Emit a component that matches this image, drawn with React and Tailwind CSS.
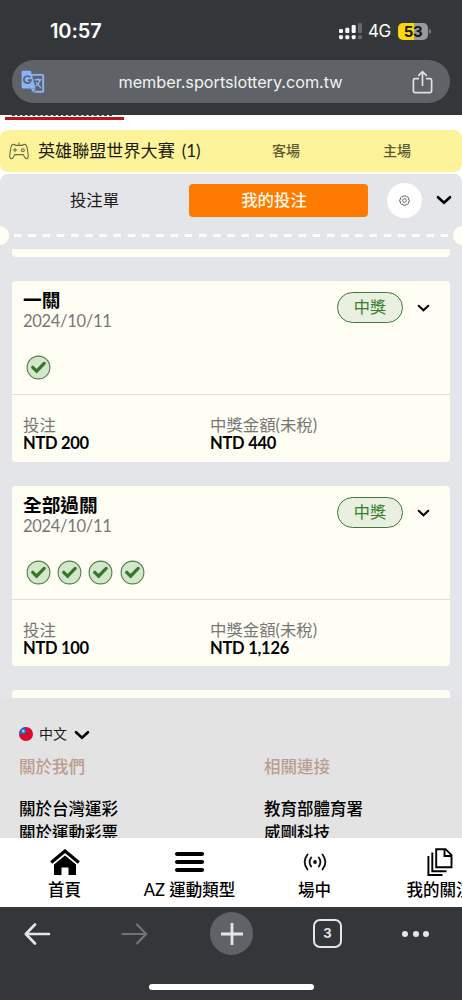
import React from 'react';

const bets = [
  { title: '一關', date: '2024/10/11', status: '中獎', legs: 1, stake: 'NTD 200', payout: 'NTD 440' },
  { title: '全部過關', date: '2024/10/11', status: '中獎', legs: 4, stake: 'NTD 100', payout: 'NTD 1,126' },
];

const Chevron = ({ className, strokeWidth = 2.6 }) => (
  <svg viewBox="0 0 16 10" className={className} fill="none" stroke="#000" strokeWidth={strokeWidth} strokeLinecap="round">
    <path d="M2 2.2 8 7.8 14 2.2" />
  </svg>
);

const CheckCircle = () => (
  <svg viewBox="0 0 25 25" className="w-[25px] h-[25px]" fill="none">
    <circle cx="12.5" cy="12.5" r="11.4" fill="#d3e8cb" stroke="#547a48" strokeWidth="1.1" />
    <path d="M6.7 12.3 10.6 16.2 18.2 8.4" stroke="#37752a" strokeWidth="3.2" strokeLinecap="round" />
  </svg>
);

const StatusBar = () => (
  <div className="flex h-[60px] shrink-0 items-center pt-[2px] pl-[50px] pr-[31px] font-['Inter',sans-serif] text-white">
    <span className="text-[20px] font-semibold leading-6 tracking-[-0.1px]">10:57</span>
    <div className="ml-auto flex items-center">
      <svg viewBox="0 0 24 17" className="h-[17px] w-6" fill="#fff">
        <rect x="0" y="6" width="4" height="4" rx="1.2" />
        <rect x="6.3" y="4.8" width="4" height="5.2" rx="1.2" />
        <rect x="12.7" y="2" width="4" height="8" rx="1.2" />
        <rect x="19" y="0" width="4" height="10" rx="1.2" opacity=".25" />
        <rect x="0" y="12.2" width="4" height="4" rx="1.4" />
        <rect x="6.3" y="12.2" width="4" height="4" rx="1.4" />
        <rect x="12.7" y="12.2" width="4" height="4" rx="1.4" />
        <rect x="19" y="12.2" width="4" height="4" rx="1.4" opacity=".25" />
      </svg>
      <span className="ml-[5px] w-[25px] text-[17px] leading-6 tracking-[-0.5px]">4G</span>
      <div className="ml-[5px] flex h-[17px] w-[30px] items-center justify-center rounded-[5px] bg-linear-to-r from-[#fcd70e] from-52% to-[#98999c] to-52% text-[15px] font-bold leading-[17px] tracking-[-0.3px] text-[#171717]">
        53
      </div>
      <div className="ml-[1px] h-[5px] w-[2px] rounded-r-full bg-[#77797c]" />
    </div>
  </div>
);

const TranslateIcon = () => (
  <svg viewBox="0 0 24 24" className="h-6 w-6" fill="none">
    <path d="M10.5 4.9H21.3q.9 0 .9.9V20.9q0 .9-.9.9H13.5" stroke="#8ab4f8" strokeWidth="1.9" />
    <path d="M2 .8H9.8L14.6 18.4H2Q.6 18.4.6 17V2.2Q.6.8 2 .8Z" fill="#8ab4f8" />
    <path d="M9.8 18.4H14.6L12.2 22.4Z" fill="#8ab4f8" />
    <path d="M9.3 7.4A3.6 3.6 0 1 0 10 10.2H6.8" stroke="#55606b" strokeWidth="1.7" />
    <path d="M13.6 9.7H20.5M16.8 8.2V9.7M19.2 9.7Q18 14 14.6 16.2M15 12.4 20 18" stroke="#8ab4f8" strokeWidth="1.4" />
  </svg>
);

const AddressBar = () => (
  <div className="mx-3 flex h-[43px] shrink-0 items-center rounded-full bg-[#5f6367] pl-[9px] pr-[17px]">
    <TranslateIcon />
    <span className="flex-1 pl-[4px] text-center font-['Inter',sans-serif] text-[16.3px] leading-5 tracking-[-0.05px] text-[#f1f1f2]">
      member.sportslottery.com.tw
    </span>
    <svg viewBox="0 0 21 24" className="h-6 w-[21px]" fill="none" stroke="#dfe1e4" strokeWidth="1.7">
      <path d="M7 8.6H3q-1.6 0-1.6 1.6V21q0 1.6 1.6 1.6h15q1.6 0 1.6-1.6V10.2q0-1.6-1.6-1.6h-4" />
      <path d="M10.5 16V2M6.3 5.8 10.5 1.6 14.7 5.8" />
    </svg>
  </div>
);

const LeagueRow = () => (
  <div className="flex h-[42px] shrink-0 items-center rounded-lg bg-[#fdf39a] pl-[9px]">
    <svg viewBox="0 0 20 18" className="h-[18px] w-5" fill="none" stroke="#6f6a45" strokeWidth="1.1" strokeLinecap="round" strokeLinejoin="round">
      <path d="M3.6 2.6Q5.5 2 6.5 3.4H13.5Q14.5 2 16.4 2.6 17.8 3.4 18.3 6.5L19.3 13.5Q19.3 16.8 17.3 16.6 15.6 16.2 14.4 12.6H5.6Q4.4 16.2 2.7 16.6.7 16.8.7 13.5L1.7 6.5Q2.2 3.4 3.6 2.6ZM10 3.4V.8" />
      <path d="M6 6.2V9.8M4.2 8H7.8" />
      <circle cx="13.8" cy="8.2" r="1.5" />
    </svg>
    <span className="ml-[9px] w-[234px] text-[17.1px] leading-6 text-[#1d1b0e] [word-spacing:2.5px]">英雄聯盟世界大賽 (1)</span>
    <span className="w-[111px] text-[14px] font-medium leading-5 text-[#5d5935]">客場</span>
    <span className="text-[14px] font-medium leading-5 text-[#5d5935]">主場</span>
  </div>
);

const Tabs = () => (
  <div className="flex h-[52px] shrink-0 items-center">
    <div className="w-[189px] text-center text-[16.4px] text-[#1b1b1b]">投注單</div>
    <div className="flex h-[33px] w-[179px] items-center justify-center rounded-[4px] bg-[#ff7a00] pr-[9px] text-[16.4px] font-medium text-[#fff8ea]">
      我的投注
    </div>
    <div className="ml-[19px] flex h-[35px] w-[35px] items-center justify-center rounded-full bg-white">
      <svg viewBox="0 0 24 24" className="h-[11px] w-[11px]" fill="none" stroke="#555" strokeWidth="1.8" strokeLinejoin="round">
        <path d="M9.5 2h5l1 2.4 2.6-1 3 3.3-1 2.5 2.4 1v4l-2.4 1 1 2.5-3 3.3-2.6-1-1 2.4h-5l-1-2.4-2.6 1-3-3.3 1-2.5-2.4-1v-4l2.4-1-1-2.5 3-3.3 2.6 1Z" />
        <circle cx="12" cy="12" r="4" />
      </svg>
    </div>
    <Chevron className="ml-[14px] h-[10px] w-4" />
  </div>
);

const TicketEdge = () => (
  <div className="flex h-[19px] shrink-0 items-center justify-between">
    <div className="h-[19px] w-[9px] rounded-r-full bg-[#fffef5]" />
    <svg viewBox="0 0 434 3" className="h-[3px] w-[434px]">
      <path d="M0 1.5H434" stroke="#fffef5" strokeWidth="3" strokeDasharray="7.5 6.72" />
    </svg>
    <div className="h-[19px] w-[9px] rounded-l-full bg-[#fffef5]" />
  </div>
);

const BetCard = ({ bet }) => (
  <div className="mx-3 mt-6 flex h-[180.5px] shrink-0 flex-col rounded-[4px] bg-[#fffef5]">
    <div className="flex h-[114px] border-b border-[#dedede] pl-[11px]">
      <div className="flex-1 pt-[9px]">
        <div className="h-[21px] text-[18.7px] font-bold leading-[21px] text-black">{bet.title}</div>
        <div className="h-[20px] text-[16.5px] leading-[20px] tracking-[-0.3px] text-[#777]">{bet.date}</div>
        <div className="ml-[3px] mt-[24px] flex gap-[6.2px]">
          {Array.from({ length: bet.legs }, (_, i) => (
            <CheckCircle key={i} />
          ))}
        </div>
      </div>
      <div className="mt-[11px] flex h-[31px] w-[66px] items-center justify-center rounded-full border border-[#41793a] bg-[#e9f0df] text-[16.2px] text-[#3a7c31]">
        {bet.status}
      </div>
      <Chevron className="ml-[14px] mr-[20px] mt-[23px] h-[8px] w-[13px]" />
    </div>
    <div className="grid grid-cols-[187px_1fr] pl-[11px] pt-[21px]">
      <div>
        <div className="h-[18px] text-[16.4px] leading-[18px] text-[#777]">投注</div>
        <div className="h-[18px] text-[16.5px] font-bold leading-[18px] tracking-[-0.3px] text-black">{bet.stake}</div>
      </div>
      <div>
        <div className="h-[18px] text-[16.4px] leading-[18px] text-[#777]">中獎金額(未稅)</div>
        <div className="h-[18px] text-[16.5px] font-bold leading-[18px] tracking-[-0.25px] text-black">{bet.payout}</div>
      </div>
    </div>
  </div>
);

const SiteFooter = () => (
  <div className="flex-1 overflow-hidden bg-[#e3e3e3] pl-[19px] pt-[26px]">
    <div className="flex h-5 items-center text-[14px] text-[#1b1b1b]">
      <svg viewBox="0 0 14 14" className="h-[14px] w-[14px]">
        <circle cx="7" cy="7" r="7" fill="#e1062c" />
        <path d="M7 0A7 7 0 0 0 0 7H7Z" fill="#1769c9" />
        <circle cx="4.2" cy="4" r="1.5" fill="#a9cdf2" />
      </svg>
      <span className="ml-[6px] -mt-[1px]">中文</span>
      <Chevron className="ml-[7px] mt-[1px] h-[10px] w-4" />
    </div>
    <div className="mt-[11px] grid grid-cols-[245px_1fr] text-[16.5px] font-medium leading-6 text-black">
      <div className="mb-[18px] text-[#bb9e8f]">關於我們</div>
      <div className="mb-[18px] text-[#bb9e8f]">相關連接</div>
      <div>關於台灣運彩</div>
      <div>教育部體育署</div>
      <div>關於運動彩票</div>
      <div>威剛科技</div>
    </div>
  </div>
);

const NavItem = ({ label, children }) => (
  <div className="flex w-[125px] shrink-0 flex-col items-center">
    <div className="mb-[1px] flex h-[29px] items-center">{children}</div>
    <div className="whitespace-nowrap text-[16.5px] font-medium leading-[26px] text-black">{label}</div>
  </div>
);

const SiteNav = () => (
  <div className="flex h-[69px] shrink-0 overflow-hidden bg-white pl-[2px] pt-[9px]">
    <NavItem label="首頁">
      <svg viewBox="0 0 30 26" className="h-[26px] w-[30px]">
        <path d="M1.2 13.5 15 2 28.8 13.5" fill="none" stroke="#000" strokeWidth="3.2" />
        <path d="M4 15.5 15 6.5 26 15.5V26H18.5V18.5H11.5V26H4Z" />
      </svg>
    </NavItem>
    <NavItem label="AZ 運動類型">
      <div className="flex flex-col gap-[4px]">
        <div className="h-[4px] w-[29px] rounded-full bg-black" />
        <div className="h-[4px] w-[29px] rounded-full bg-black" />
        <div className="h-[4px] w-[29px] rounded-full bg-black" />
      </div>
    </NavItem>
    <NavItem label="場中">
      <svg viewBox="0 0 24 20" className="h-5 w-6" fill="none" stroke="#111" strokeWidth="1.8" strokeLinecap="round">
        <circle cx="12" cy="10" r="1.9" fill="#111" stroke="none" />
        <path d="M8.2 5.5Q5 10 8.2 14.5M15.8 5.5Q19 10 15.8 14.5M4.5 2.5Q-1.2 10 4.5 17.5M19.5 2.5Q25.2 10 19.5 17.5" />
      </svg>
    </NavItem>
    <NavItem label="我的關注">
      <svg viewBox="0 0 26 28" className="h-7 w-[26px]" fill="none" stroke="#000" strokeWidth="1.9">
        <path d="M9.2 1.2H18.5L24.5 7.2V19.2H9.2ZM17.5 1.5V8H24.5" />
        <path d="M5.3 4.5V23.2H19.5M1.4 8V27H15.5" />
      </svg>
    </NavItem>
  </div>
);

const BrowserToolbar = () => (
  <div className="flex h-[93px] shrink-0 flex-col items-center bg-[#34373a]">
    <div className="flex h-[53px] w-full items-center pl-6">
      <svg viewBox="0 0 27 22" className="h-[22px] w-[27px]" fill="none" stroke="#e4e6e9" strokeWidth="2.6" strokeLinecap="round" strokeLinejoin="round">
        <path d="M25 11H2M11 1.5 1.8 11 11 20.5" />
      </svg>
      <svg viewBox="0 0 27 22" className="ml-[70px] h-[22px] w-[27px]" fill="none" stroke="#717375" strokeWidth="2.2" strokeLinecap="round" strokeLinejoin="round">
        <path d="M1.5 11H25M16 1.5 25.2 11 16 20.5" />
      </svg>
      <div className="ml-[62px] flex h-[43px] w-[43px] items-center justify-center rounded-full bg-[#5f6367]">
        <svg viewBox="0 0 22 22" className="h-[22px] w-[22px]" stroke="#e4e6e9" strokeWidth="2.8">
          <path d="M11 0V22M0 11H22" />
        </svg>
      </div>
      <div className="ml-[60px] flex h-[29px] w-[29px] items-center justify-center rounded-[7px] border-2 border-[#e4e6e9] font-['Inter',sans-serif] text-[13px] font-bold text-[#e4e6e9]">
        3
      </div>
      <div className="ml-[60px] flex w-[27px] justify-between">
        <div className="h-[6px] w-[6px] rounded-full bg-[#e4e6e9]" />
        <div className="h-[6px] w-[6px] rounded-full bg-[#e4e6e9]" />
        <div className="h-[6px] w-[6px] rounded-full bg-[#e4e6e9]" />
      </div>
    </div>
    <div className="mt-[24px] h-[6px] w-[165px] rounded-full bg-white" />
  </div>
);

const App = () => {
  return (
    <div className="flex h-[1000px] w-[462px] flex-col overflow-hidden bg-white font-['Lato','Noto_Sans_CJK_TC',sans-serif]">
      <div className="flex h-[115px] shrink-0 flex-col bg-[#34373a]">
        <StatusBar />
        <AddressBar />
      </div>
      {/* bottom edge of the site logo, scrolled under the address bar */}
      <div className="h-[15px] shrink-0 pl-[5px]">
        <div className="ml-[7px] w-[100px] border-t border-dashed border-[#444]" />
        <div className="mt-[1px] h-[3px] w-[119px] bg-[#b8151b]" />
      </div>
      <LeagueRow />
      <div className="mt-[2px] flex h-[524px] shrink-0 flex-col overflow-hidden rounded-t-lg bg-[#e4e5e8]">
        <Tabs />
        <TicketEdge />
        <div className="mx-3 mt-[4px] h-[8px] shrink-0 rounded-b-[4px] bg-[#fffef5]" />
        {bets.map((bet) => (
          <BetCard key={bet.title} bet={bet} />
        ))}
        <div className="mx-3 mt-[24px] h-[8px] shrink-0 rounded-t-[4px] bg-[#fffef5]" />
      </div>
      <SiteFooter />
      <SiteNav />
      <BrowserToolbar />
    </div>
  );
};

export default App;
